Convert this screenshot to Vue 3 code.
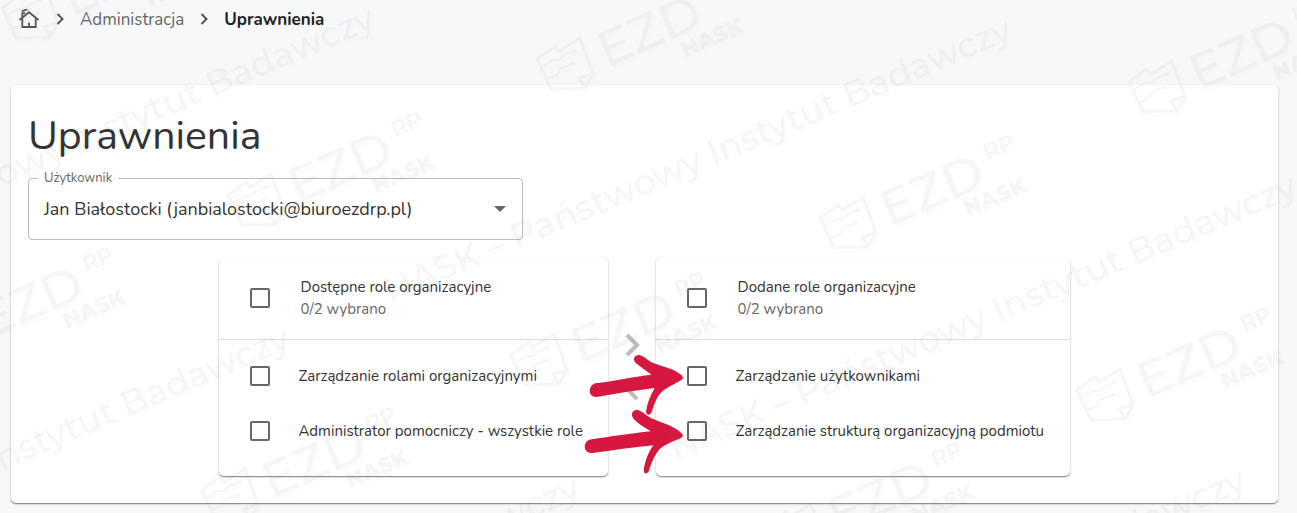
<script setup>
import { ref } from 'vue'

const users = ['Jan Białostocki (janbialostocki@biuroezdrp.pl)']
const selectedUser = ref(users[0])

const available = ref({
  title: 'Dostępne role organizacyjne',
  roles: [
    { name: 'Zarządzanie rolami organizacyjnymi', checked: false },
    { name: 'Administrator pomocniczy - wszystkie role', checked: false }
  ]
})

const added = ref({
  title: 'Dodane role organizacyjne',
  roles: [
    { name: 'Zarządzanie użytkownikami', checked: false },
    { name: 'Zarządzanie strukturą organizacyjną podmiotu', checked: false }
  ]
})

const countChecked = (list) => list.roles.filter((r) => r.checked).length
const allChecked = (list) => list.roles.length > 0 && countChecked(list) === list.roles.length

function toggleAll(list, event) {
  list.roles.forEach((r) => { r.checked = event.target.checked })
}

function move(from, to) {
  to.roles.push(...from.roles.filter((r) => r.checked).map((r) => ({ ...r, checked: false })))
  from.roles = from.roles.filter((r) => !r.checked)
}

// watermark
const logos = [
  [2, 8], [-81, 330], [228, 195], [537, 59],
  [202, 490], [511, 355], [820, 218], [1129, 82],
  [768, 525], [1077, 390]
]
const captions = [
  [-247, 292], [390, 303], [675, 460], [-332, 612], [-42, 762], [624, 754]
]
</script>

<template>
  <div class="page">
    <nav class="breadcrumbs" aria-label="Breadcrumb">
      <a href="#" class="home" aria-label="Home">
        <svg width="22" height="22" viewBox="0 0 22 22" fill="none" stroke="#555" stroke-width="1.8">
          <path d="M1.500 12 11 4.200 20.500 12" />
          <path d="M4.300 10.500V19H17.700V10.500" />
          <path d="M11 14.500v4.500" />
          <path d="M4.300 9V5.200H7.200M3.800 3.200 9.500 1.500" />
        </svg>
      </a>
      <svg class="sep" width="8" height="12" viewBox="0 0 8 12"><path d="M1.500 1 6.500 6 1.500 11" /></svg>
      <a href="#" class="crumb">Administracja</a>
      <svg class="sep" width="8" height="12" viewBox="0 0 8 12"><path d="M1.500 1 6.500 6 1.500 11" /></svg>
      <span class="crumb current">Uprawnienia</span>
    </nav>

    <main class="card">
      <h1 class="title">Uprawnienia</h1>

      <div class="field">
        <label for="user" class="field-label">Użytkownik</label>
        <select id="user" v-model="selectedUser" class="field-select">
          <option v-for="user in users" :key="user">{{ user }}</option>
        </select>
        <svg class="field-arrow" width="12" height="6" viewBox="0 0 12 6"><path d="M0 0h12L6 6z" /></svg>
      </div>

      <div class="transfer">
        <section class="list list-available">
          <label class="list-header">
            <input type="checkbox" class="checkbox" :checked="allChecked(available)" @change="toggleAll(available, $event)" />
            <span class="list-heading">
              <span class="list-title">{{ available.title }}</span>
              <span class="list-count">{{ countChecked(available) }}/{{ available.roles.length }} wybrano</span>
            </span>
          </label>
          <div class="list-body">
            <label v-for="role in available.roles" :key="role.name" class="row">
              <input v-model="role.checked" type="checkbox" class="checkbox" />
              <span>{{ role.name }}</span>
            </label>
          </div>
        </section>

        <div class="actions">
          <button type="button" class="move" aria-label="Dodaj" @click="move(available, added)">
            <svg width="16" height="24" viewBox="0 0 16 24"><path d="M3 2 13 12 3 22" /></svg>
          </button>
          <button type="button" class="move" aria-label="Usuń" @click="move(added, available)">
            <svg width="16" height="24" viewBox="0 0 16 24"><path d="M13 2 3 12 13 22" /></svg>
          </button>
          <svg class="pointers" width="104" height="124" viewBox="0 90 312 372" fill="#d6173f">
            <path d="M46 190C100 184 160 170 214 164C198 152 180 140 168 130C156 117 164 104 178 105C194 109 204 123 220 129C246 140 283 145 305 166C311 172 310 177 303 181C280 194 256 205 242 219C226 237 221 259 215 277C210 287 199 286 198 275C201 251 211 226 224 204C166 212 108 220 50 231C22 232 24 196 46 190Z" />
            <path d="M34 358C90 350 156 340 212 334C194 322 176 312 164 300C148 284 158 268 172 270C188 273 200 288 214 295C244 308 282 318 303 338C311 345 310 350 302 355C278 365 250 375 236 391C220 411 213 434 206 454C201 464 191 462 191 450C195 424 204 398 220 376C158 382 98 391 38 399C6 402 8 362 34 358Z" />
          </svg>
        </div>

        <section class="list list-added">
          <label class="list-header">
            <input type="checkbox" class="checkbox" :checked="allChecked(added)" @change="toggleAll(added, $event)" />
            <span class="list-heading">
              <span class="list-title">{{ added.title }}</span>
              <span class="list-count">{{ countChecked(added) }}/{{ added.roles.length }} wybrano</span>
            </span>
          </label>
          <div class="list-body">
            <label v-for="role in added.roles" :key="role.name" class="row">
              <input v-model="role.checked" type="checkbox" class="checkbox" />
              <span>{{ role.name }}</span>
            </label>
          </div>
        </section>
      </div>
    </main>

    <svg class="watermark" aria-hidden="true">
      <g v-for="([x, y], i) in logos" :key="'l' + i" :transform="`translate(${x} ${y})`">
        <g class="mark">
          <path d="M0 0 18-13 22-8 43-21 56 15 48 29 14 30Z" />
          <path d="M56 15 42 19 48 29" />
          <g class="circuit">
            <path d="M3 9 16 1 22 1 28-4 37-8M11 20 20 16 23 10 35 5" />
            <circle cx="38" cy="-8" r="1" />
            <circle cx="36" cy="5" r="1" />
          </g>
        </g>
        <g transform="rotate(-23.6)">
          <text class="mark-ezd" x="60" y="36">EZD</text>
          <text class="mark-rp" x="176" y="14">RP</text>
          <text class="mark-nask" x="136" y="58">NASK</text>
        </g>
      </g>
      <text
        v-for="([x, y], i) in captions"
        :key="'c' + i"
        class="mark-caption"
        :transform="`translate(${x} ${y}) rotate(-23)`"
      >NASK – Państwowy Instytut Badawczy</text>
    </svg>
  </div>
</template>

<style>
body {
  margin: 0;
  background: #f7f8fa;
}
</style>

<style scoped>
.page {
  position: relative;
  overflow: hidden;
  box-sizing: border-box;
  min-height: 100vh;
  padding: 8px 19px 10px 11px;
  font-family: 'Nunito', 'Lato', sans-serif;
  color: #333;
}
.breadcrumbs {
  display: flex;
  align-items: center;
  height: 22px;
  padding-left: 7px;
  margin-bottom: 55px;
  font-size: 17px;
}
.home {
  display: flex;
}
.sep {
  margin: 0 16px;
  fill: none;
  stroke: #555;
  stroke-width: 2;
}
.crumb {
  color: #666;
  text-decoration: none;
}
.current {
  color: #222;
  font-weight: 700;
}
.card {
  box-sizing: border-box;
  padding: 27px 18px 27px 17px;
  background: #fff;
  border-radius: 5px;
  box-shadow: 0 1px 1px rgba(0, 0, 0, 0.4), 0 1px 3px rgba(0, 0, 0, 0.16);
}
.title {
  margin: 0 0 18px;
  font-size: 41px;
  line-height: 48px;
  font-weight: 400;
}
.field {
  position: relative;
  max-width: 495px;
  margin-bottom: 18px;
}
.field-label {
  position: absolute;
  top: -8px;
  left: 10px;
  padding: 0 6px;
  background: #fff;
  font-size: 13px;
  line-height: 16px;
  color: #666;
}
.field-select {
  display: block;
  appearance: none;
  box-sizing: border-box;
  width: 100%;
  height: 62px;
  padding: 0 40px 0 15px;
  border: 1px solid #bbb;
  border-radius: 4px;
  background: #fff;
  font-family: inherit;
  font-size: 18px;
  color: #333;
}
.field-arrow {
  position: absolute;
  top: 28px;
  right: 17px;
  fill: #666;
  pointer-events: none;
}
.transfer {
  display: flex;
  justify-content: center;
}
.list {
  background: #fff;
  border-radius: 5px;
  box-shadow: 0 1px 1px rgba(0, 0, 0, 0.4), 0 1px 3px rgba(0, 0, 0, 0.16);
  font-size: 15px;
  line-height: 22px;
}
.list-available {
  flex: 0 1 389px;
}
.list-added {
  flex: 0 1 414px;
}
.list-header {
  display: flex;
  align-items: center;
  gap: 31px;
  box-sizing: border-box;
  height: 82px;
  padding: 0 18px 1px 31px;
  border-bottom: 1px solid #ddd;
}
.list-heading {
  display: flex;
  flex-direction: column;
}
.list-count {
  color: #666;
}
.list-body {
  padding: 8px 0 18px;
}
.row {
  display: flex;
  align-items: center;
  gap: 29px;
  height: 55px;
  padding: 0 0 0 31px;
  white-space: nowrap;
}
.checkbox {
  appearance: none;
  flex: none;
  box-sizing: border-box;
  width: 20px;
  height: 20px;
  margin: 0;
  border: 2px solid #666;
  border-radius: 2px;
}
.checkbox:checked {
  background: #666;
}
.actions {
  position: relative;
  display: flex;
  flex-direction: column;
  align-items: center;
  justify-content: center;
  gap: 20px;
  width: 48px;
}
.move {
  display: flex;
  padding: 0;
  border: 0;
  background: none;
  fill: none;
  stroke: #bdbdbd;
  stroke-width: 4;
}
.pointers {
  position: absolute;
  top: 92px;
  left: -28px;
  pointer-events: none;
}
.watermark {
  position: absolute;
  top: 0;
  left: 0;
  width: 100%;
  height: 100%;
  pointer-events: none;
  fill: #888;
  opacity: 0.07;
  filter: drop-shadow(2px 3px 2px rgba(0, 0, 0, 0.2));
}
.mark {
  fill: none;
  stroke: #888;
  stroke-width: 3;
}
.circuit {
  stroke-width: 2;
}
.mark-ezd {
  font: 500 50px 'Montserrat', 'DejaVu Sans', sans-serif;
}
.mark-rp {
  font: 600 22px 'Montserrat', 'DejaVu Sans', sans-serif;
}
.mark-nask {
  font: 800 22px 'Montserrat', 'DejaVu Sans', sans-serif;
}
.mark-caption {
  font: 500 35px 'Montserrat', 'Lato', sans-serif;
}
</style>
